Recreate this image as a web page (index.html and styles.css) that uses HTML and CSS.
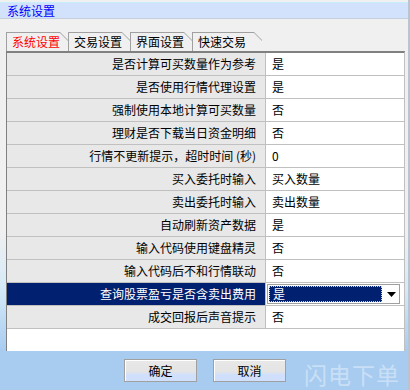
FILE: index.html
```html
<!DOCTYPE html>
<html lang="zh-CN">
<head>
  <meta charset="UTF-8" />
  <title>系统设置</title>
  <link rel="stylesheet" href="styles.css">
</head>
<body>
  <div class="window">
    <div class="titlebar"><span class="title-text">系统设置</span></div>

    <div class="tabs">
      <div class="tab active"><span>系统设置</span></div>
      <div class="tab"><span>交易设置</span></div>
      <div class="tab"><span>界面设置</span></div>
      <div class="tab wide"><span>快速交易</span></div>
    </div>

    <div class="grid">
      <div class="row"><div class="label">是否计算可买数量作为参考</div><div class="value">是</div></div>
      <div class="row"><div class="label">是否使用行情代理设置</div><div class="value">是</div></div>
      <div class="row"><div class="label">强制使用本地计算可买数量</div><div class="value">否</div></div>
      <div class="row"><div class="label">理财是否下载当日资金明细</div><div class="value">否</div></div>
      <div class="row"><div class="label">行情不更新提示，超时时间 (秒)</div><div class="value">0</div></div>
      <div class="row"><div class="label">买入委托时输入</div><div class="value">买入数量</div></div>
      <div class="row"><div class="label">卖出委托时输入</div><div class="value">卖出数量</div></div>
      <div class="row"><div class="label">自动刷新资产数据</div><div class="value">是</div></div>
      <div class="row"><div class="label">输入代码使用键盘精灵</div><div class="value">否</div></div>
      <div class="row"><div class="label">输入代码后不和行情联动</div><div class="value">否</div></div>
      <div class="row selected">
        <div class="label">查询股票盈亏是否含卖出费用</div>
        <div class="value">
          <div class="combo">
            <div class="combo-text">是</div>
            <div class="combo-arrow">
              <svg width="9" height="5" viewBox="0 0 9 5"><path d="M0 0H9L4.5 5Z" fill="#000"/></svg>
            </div>
          </div>
        </div>
      </div>
      <div class="row"><div class="label">成交回报后声音提示</div><div class="value">否</div></div>
    </div>

    <div class="footer">
      <button class="btn">确定</button>
      <button class="btn">取消</button>
      <div class="watermark">闪电下单</div>
    </div>
  </div>
</body>
</html>
```

FILE: styles.css
```css
body {
  margin: 0;
  font-family: "Noto Sans CJK SC", "Liberation Sans", sans-serif;
  font-size: 12px;
  color: #000;
  background: #a8ccf0;
}

.window {
  width: 408px;
  height: 390px;
  border-right: 2px solid #b8c4d0;
  display: flex;
  flex-direction: column;
  background: linear-gradient(#f0f0f0 0, #f0f0f0 230px, #d4eaf8 290px, #a8ccf0 350px);
  position: relative;
}

.titlebar {
  margin-top: 2px;
  height: 15px;
  padding-left: 7px;
  border-top: 1px solid #c8f0fc;
  border-bottom: 1px solid #c4d0dc;
  background: #d2e2fc;
  display: flex;
  align-items: center;
}

.title-text {
  color: #0000ff;
  font-size: 12px;
  line-height: 15px;
}

.tabs {
  display: flex;
  margin: 13px 0 0 6px;
  height: 19px;
}

.tab {
  width: 62px;
  height: 19px;
  background: #a0a0a0;
  clip-path: polygon(0 0, calc(100% - 8px) 0, 100% 8px, 100% 100%, 0 100%);
}

.tab.wide {
  width: 70px;
}

.tab span {
  display: block;
  height: 18px;
  margin: 1px 0 0 1px;
  padding-left: 5px;
  line-height: 18px;
  background: #f0f0f0;
  clip-path: polygon(0 0, calc(100% - 8px) 0, 100% 8px, 100% 100%, 0 100%);
}

.tab.active span {
  color: #ff0000;
}

.grid {
  margin-left: 6px;
  width: 397px;
  height: 298px;
  border-top: 2px solid #808080;
  border-left: 1px solid #808080;
  border-right: 1px solid #c0c0c0;
  background: #fff;
}

.row {
  display: grid;
  grid-template-columns: 259px 1fr;
  height: 23px;
}

.label,
.value {
  height: 22px;
  line-height: 22px;
  border-bottom: 1px solid #c0c0c0;
  white-space: nowrap;
}

.label {
  background: #e8e8e8;
  border-right: 1px solid #c0c0c0;
  text-align: right;
  padding-right: 9px;
}

.value {
  padding-left: 6px;
}

.selected .label {
  background: #022070;
  color: #fff;
}

.selected .value {
  padding: 1px 4px 1px 1px;
  height: 20px;
}

.combo {
  display: flex;
  height: 18px;
  border: 1px solid #a0a0a0;
  background: #fff;
}

.combo-text {
  flex: 1;
  margin: 1px;
  background: #022070;
  color: #fff;
  line-height: 14px;
  padding-left: 3px;
  border: 1px dotted #f0d060;
}

.combo-arrow {
  width: 16px;
  display: flex;
  align-items: center;
  justify-content: center;
}

.footer {
  flex: 1;
  display: flex;
  justify-content: center;
  gap: 16px;
  padding: 8px 0 0 2px;
  background: #a8ccf0;
  position: relative;
  overflow: hidden;
}

.btn {
  width: 73px;
  height: 23px;
  font-family: "Noto Sans CJK SC", "Liberation Sans", sans-serif;
  font-size: 12px;
  color: #000;
  border: 1px solid #a0a0a0;
  box-shadow: inset 1px 1px 0 #fff;
  background: linear-gradient(#e8e8e8 0, #e4e4e4 55%, #d0e0fc 70%, #d0e0fc 100%);
  padding: 0;
}

.watermark {
  position: absolute;
  right: 8px;
  top: 6px;
  font-size: 23px;
  letter-spacing: 1px;
  color: rgba(230, 240, 252, 0.55);
}
```
